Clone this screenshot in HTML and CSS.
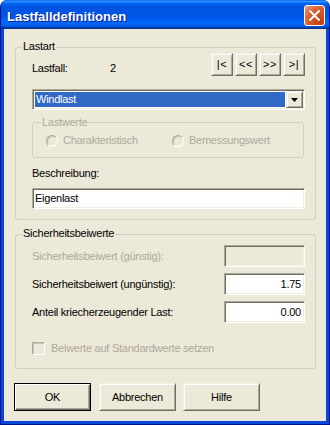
FILE: index.html
```html
<!DOCTYPE html>
<html lang="de">
<head>
<meta charset="utf-8">
<title>Lastfalldefinitionen</title>
<link rel="stylesheet" href="styles.css">
</head>
<body>
<div class="window">
  <div class="titlebar">
    <span class="title">Lastfalldefinitionen</span>
    <span class="close">
      <svg width="19" height="19" viewBox="0 0 19 19"><path d="M4.5 4.5 L14.5 14.5 M14.5 4.5 L4.5 14.5" stroke="#fff" stroke-width="2" fill="none"/></svg>
    </span>
  </div>
  <div class="client">
    <div class="group group-lastart">
      <span class="group-label">Lastart</span>
      <div class="row-lastfall">
        <span class="lf-label">Lastfall:</span>
        <span class="lf-value">2</span>
        <div class="nav">
          <div class="btn nav-btn">|&lt;</div>
          <div class="btn nav-btn">&lt;&lt;</div>
          <div class="btn nav-btn">&gt;&gt;</div>
          <div class="btn nav-btn">&gt;|</div>
        </div>
      </div>
      <div class="combo">
        <span class="combo-sel">Windlast</span>
        <span class="combo-btn"><svg width="7" height="4" viewBox="0 0 7 4"><path d="M0 0 H7 L3.5 4 Z" fill="#000"/></svg></span>
      </div>
      <div class="group sub-group">
        <span class="group-label sub-label disabled">Lastwerte</span>
        <div class="radios">
          <div class="radio-item disabled"><span class="radio"></span>Charakteristisch</div>
          <div class="radio-item disabled"><span class="radio"></span>Bemessungswert</div>
        </div>
      </div>
      <div class="field-label">Beschreibung:</div>
      <div class="textbox">Eigenlast</div>
    </div>

    <div class="group group-sicher">
      <span class="group-label">Sicherheitsbeiwerte</span>
      <div class="srow">
        <span class="disabled">Sicherheitsbeiwert (günstig):</span>
        <div class="numbox numbox-disabled"></div>
      </div>
      <div class="srow">
        <span>Sicherheitsbeiwert (ungünstig):</span>
        <div class="numbox">1.75</div>
      </div>
      <div class="srow">
        <span>Anteil kriecherzeugender Last:</span>
        <div class="numbox">0.00</div>
      </div>
      <div class="check-row disabled">
        <span class="checkbox"></span>Beiwerte auf Standardwerte setzen
      </div>
    </div>

    <div class="buttons">
      <div class="btn dlg-btn btn-default">OK</div>
      <div class="btn dlg-btn btn-cancel">Abbrechen</div>
      <div class="btn dlg-btn btn-help">Hilfe</div>
    </div>
  </div>
</div>
</body>
</html>
```
FILE: styles.css
```css
* { box-sizing: border-box; }

html, body {
  margin: 0;
  padding: 0;
  background: #ffffff;
}

body {
  width: 330px;
  height: 425px;
  overflow: hidden;
  font-family: "Liberation Sans", Arial, sans-serif;
  font-size: 11px;
  line-height: 13px;
  letter-spacing: -0.25px;
  color: #000;
}

.window {
  width: 330px;
  height: 425px;
  display: flex;
  flex-direction: column;
  background: #0847d8;
  border: 1px solid #00138c;
  border-top: none;
  border-radius: 7px 7px 0 0;
  overflow: hidden;
}

.titlebar {
  height: 29px;
  flex: none;
  display: flex;
  justify-content: space-between;
  align-items: flex-start;
  padding: 0 4px 0 6px;
  background: linear-gradient(to bottom, #0058ee 0%, #3593ff 4%, #288eff 6%, #127dff 8%, #036ffc 10%, #0262ee 14%, #0057e5 20%, #0054df 24%, #0055ea 56%, #005bf5 66%, #026afe 76%, #0062ef 86%, #0052d6 92%, #0040ab 94%, #003092 100%);
}

.title {
  margin-top: 9px;
  font-weight: bold;
  font-size: 13px;
  line-height: 15px;
  letter-spacing: 0;
  color: #fff;
  text-shadow: 1px 1px 0 #0a1a8c;
}

.close {
  margin-top: 5px;
  width: 21px;
  height: 21px;
  border: 1px solid #fff;
  border-radius: 3px;
  display: flex;
  align-items: center;
  justify-content: center;
  background: radial-gradient(circle at 85% 85%, #c44110 0%, #d95a2a 55%, #e2774e 75%, #f0a587 100%);
}

.client {
  flex: 1;
  margin: 0 3px 3px;
  background: #ece9d8;
  padding: 18px 10px 10px 11px;
  display: flex;
  flex-direction: column;
}

.group {
  position: relative;
  border: 1px solid #d0d0bf;
  border-radius: 3px;
}

.group-label {
  position: absolute;
  top: -8px;
  left: 6px;
  padding: 0 1px;
  background: #ece9d8;
}

.sub-label {
  top: -7px;
  left: 8px;
}

.disabled { color: #aca899; }

.group-lastart {
  padding: 5px 10px 10px 16px;
  display: flex;
  flex-direction: column;
}

.row-lastfall {
  height: 23px;
  display: flex;
  align-items: flex-start;
}

.lf-label {
  width: 78px;
  margin-top: 9px;
}

.lf-value {
  margin-top: 9px;
}

.nav {
  margin-left: auto;
  display: flex;
  gap: 2px;
}

.btn {
  background: #ece9d8;
  border: 1px solid;
  border-color: #f1efe2 #716f64 #716f64 #f1efe2;
  box-shadow: inset 1px 1px 0 #ffffff, inset -1px -1px 0 #aca899;
  display: flex;
  align-items: center;
  justify-content: center;
}

.nav-btn {
  width: 22px;
  height: 23px;
  letter-spacing: 0.5px;
}

.combo {
  margin-top: 13px;
  height: 21px;
  display: flex;
  background: #fff;
  border: 1px solid;
  border-color: #aca899 #ffffff #ffffff #aca899;
  box-shadow: inset 1px 1px 0 #716f64, inset -1px -1px 0 #f1efe2;
  padding: 1px;
}

.combo-sel {
  flex: 1;
  margin: 1px;
  height: 15px;
  line-height: 15px;
  padding-left: 1px;
  background: #316ac5;
  color: #fff;
}

.combo-btn {
  width: 17px;
  height: 17px;
  background: #ece9d8;
  border: 1px solid;
  border-color: #f1efe2 #716f64 #716f64 #f1efe2;
  box-shadow: inset 1px 1px 0 #ffffff, inset -1px -1px 0 #aca899;
  display: flex;
  align-items: center;
  justify-content: center;
}

.sub-group {
  margin-top: 12px;
  width: 272px;
  height: 36px;
  padding: 11px 0 0 13px;
}

.radios {
  display: grid;
  grid-template-columns: 126px auto;
}

.radio-item {
  display: flex;
  align-items: center;
  height: 13px;
}

.radio {
  width: 12px;
  height: 12px;
  margin-right: 5px;
  border-radius: 50%;
  border: 1px solid;
  border-color: #aca899 #ffffff #ffffff #aca899;
  box-shadow: inset 1px 1px 0 #c9c6b6;
  background: #ece9d8;
}

.field-label {
  margin-top: 9px;
}

.textbox {
  margin-top: 8px;
  height: 21px;
  line-height: 19px;
  padding: 0 2px;
  background: #fff;
  border: 1px solid;
  border-color: #aca899 #ffffff #ffffff #aca899;
  box-shadow: inset 1px 1px 0 #716f64, inset -1px -1px 0 #f1efe2;
}

.group-sicher {
  margin-top: 14px;
  padding: 10px 10px 13px 16px;
  display: flex;
  flex-direction: column;
  gap: 6px;
}

.srow {
  height: 22px;
  display: flex;
  align-items: center;
  justify-content: space-between;
}

.numbox {
  width: 81px;
  height: 22px;
  line-height: 20px;
  padding: 0 3px 0 2px;
  text-align: right;
  background: #fff;
  border: 1px solid;
  border-color: #aca899 #ffffff #ffffff #aca899;
  box-shadow: inset 1px 1px 0 #716f64, inset -1px -1px 0 #f1efe2;
}

.numbox-disabled {
  background: #ece9d8;
}

.check-row {
  margin-top: 13px;
  height: 13px;
  display: flex;
  align-items: center;
}

.checkbox {
  width: 13px;
  height: 13px;
  margin-right: 6px;
  border: 1px solid;
  border-color: #aca899 #ffffff #ffffff #aca899;
  box-shadow: inset 1px 1px 0 #c9c6b6;
  background: #ece9d8;
}

.buttons {
  margin-top: 14px;
  margin-left: -1px;
  display: flex;
}

.dlg-btn {
  width: 77px;
  height: 28px;
}

.btn-default {
  border: 1px solid #000;
  box-shadow: inset 1px 1px 0 #ffffff, inset -1px -1px 0 #716f64, inset -2px -2px 0 #aca899;
}

.btn-cancel { margin-left: 8px; }
.btn-help { margin-left: 7px; }
```
